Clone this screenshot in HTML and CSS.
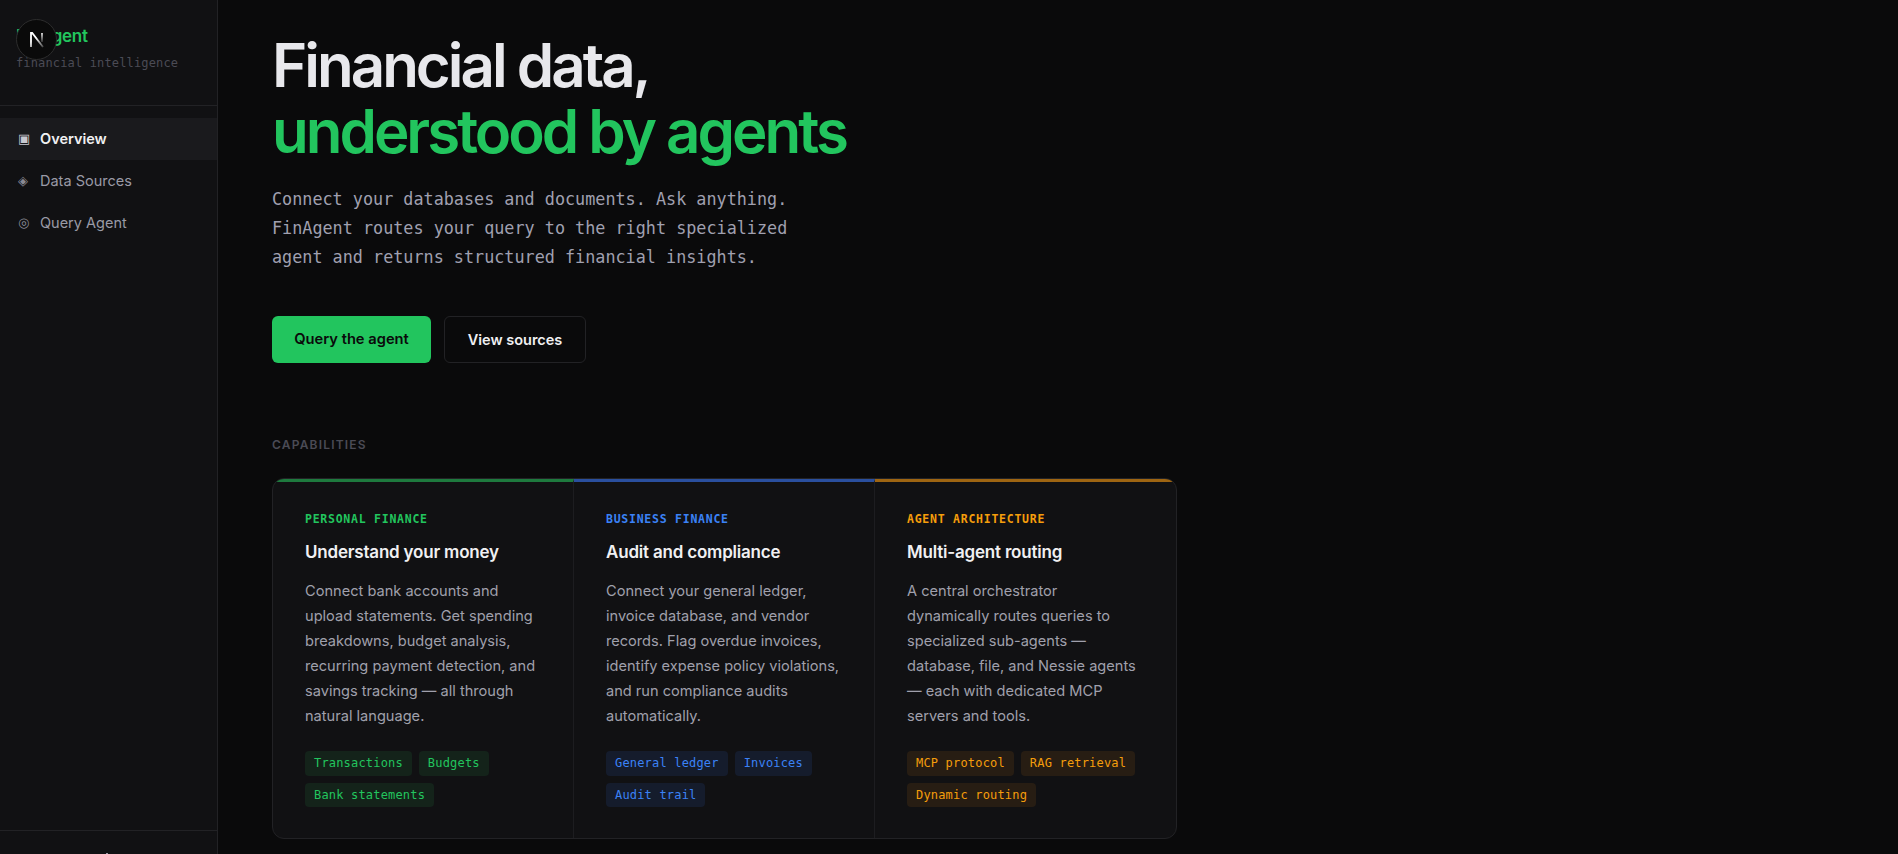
FILE: index.html
```html
<!DOCTYPE html>
<html lang="en">
<head>
    <meta charset="UTF-8">
    <meta name="viewport" content="width=device-width, initial-scale=1.0">
    <title>FinAgent</title>
    <link rel="stylesheet" href="styles.css">
</head>
<body>
<div class="app">
    <aside class="sidebar">
        <div class="brand">
            <div class="brand-name">FinAgent</div>
            <div class="brand-sub">financial intelligence</div>
        </div>
        <nav class="nav">
            <a class="nav-item active"><span class="nav-icon">▣</span>Overview</a>
            <a class="nav-item"><span class="nav-icon">◈</span>Data Sources</a>
            <a class="nav-item"><span class="nav-icon">◎</span>Query Agent</a>
        </nav>
        <div class="sidebar-foot"><span class="foot-mark"></span></div>
    </aside>

    <main class="main">
        <h1 class="hero-title">Financial data,<br><span class="green">understood by agents</span></h1>
        <p class="hero-text">Connect your databases and documents. Ask anything.<br>FinAgent routes your query to the right specialized<br>agent and returns structured financial insights.</p>
        <div class="actions">
            <a class="btn btn-primary">Query the agent</a>
            <a class="btn btn-ghost">View sources</a>
        </div>

        <div class="section-label">CAPABILITIES</div>

        <div class="cards">
            <section class="card card-green">
                <div class="card-tag">PERSONAL FINANCE</div>
                <h3 class="card-title">Understand your money</h3>
                <p class="card-text">Connect bank accounts and upload statements. Get spending breakdowns, budget analysis, recurring payment detection, and savings tracking — all through natural language.</p>
                <div class="chips">
                    <span class="chip">Transactions</span>
                    <span class="chip">Budgets</span>
                    <span class="chip">Bank statements</span>
                </div>
            </section>
            <section class="card card-blue">
                <div class="card-tag">BUSINESS FINANCE</div>
                <h3 class="card-title">Audit and compliance</h3>
                <p class="card-text">Connect your general ledger, invoice database, and vendor records. Flag overdue invoices, identify expense policy violations, and run compliance audits automatically.</p>
                <div class="chips">
                    <span class="chip">General ledger</span>
                    <span class="chip">Invoices</span>
                    <span class="chip">Audit trail</span>
                </div>
            </section>
            <section class="card card-amber">
                <div class="card-tag">AGENT ARCHITECTURE</div>
                <h3 class="card-title">Multi-agent routing</h3>
                <p class="card-text">A central orchestrator dynamically routes queries to specialized sub-agents — database, file, and Nessie agents — each with dedicated MCP servers and tools.</p>
                <div class="chips">
                    <span class="chip">MCP protocol</span>
                    <span class="chip">RAG retrieval</span>
                    <span class="chip">Dynamic routing</span>
                </div>
            </section>
        </div>
    </main>
</div>

<div class="next-badge">
    <svg width="16" height="16" viewBox="0 0 16 16" fill="none">
        <defs>
            <linearGradient id="n-fade" x1="4" y1="2" x2="14" y2="15" gradientUnits="userSpaceOnUse">
                <stop offset="0.3" stop-color="#fff"/>
                <stop offset="1" stop-color="#fff" stop-opacity="0.25"/>
            </linearGradient>
            <linearGradient id="n-right" x1="13" y1="1" x2="13" y2="11" gradientUnits="userSpaceOnUse">
                <stop offset="0" stop-color="#fff"/>
                <stop offset="1" stop-color="#fff" stop-opacity="0.1"/>
            </linearGradient>
        </defs>
        <path d="M2 15V1h1.2L14 15" stroke="url(#n-fade)" stroke-width="1.8"/>
        <path d="M13 1v9" stroke="url(#n-right)" stroke-width="1.6"/>
    </svg>
</div>
</body>
</html>
```

FILE: styles.css
```css
* {
    box-sizing: border-box;
}

body {
    margin: 0;
    background-color: #0a0a0b;
    color: #f0f0f2;
    font-family: Inter, "Noto Sans", sans-serif;
    overflow: hidden;
}

.app {
    display: flex;
    height: 854px;
}

.sidebar {
    width: 218px;
    flex-shrink: 0;
    display: flex;
    flex-direction: column;
    background-color: #111113;
    border-right: 1px solid #222225;
}

.brand {
    height: 106px;
    padding: 24px 16px 0;
    border-bottom: 1px solid #222225;
}

.brand-name {
    font-size: 17px;
    line-height: 24px;
    font-weight: 600;
    letter-spacing: -0.3px;
    color: #22c55e;
}

.brand-sub {
    margin-top: 7px;
    font-family: "DejaVu Sans Mono", "Liberation Mono", monospace;
    font-size: 12px;
    line-height: 16px;
    letter-spacing: 0.15px;
    color: #4b4b55;
}

.nav {
    flex: 1;
    padding-top: 12px;
}

.nav-item {
    display: flex;
    align-items: center;
    height: 42px;
    padding: 0 0 2px 18px;
    font-size: 14.5px;
    color: #9a9aa6;
}

.nav-item.active {
    background-color: #1a1a1d;
    color: #f0f0f2;
    font-weight: 600;
}

.nav-icon {
    width: 22px;
    flex-shrink: 0;
    font-family: "DejaVu Sans", sans-serif;
    font-size: 13px;
    font-weight: 400;
    color: #8a8a95;
}

.active .nav-icon {
    color: #c8c8d0;
}

.sidebar-foot {
    display: flex;
    align-items: flex-end;
    height: 24px;
    border-top: 1px solid #222225;
    padding-left: 106px;
}

.foot-mark {
    width: 2px;
    height: 1px;
    background-color: #9a9aa6;
}

.main {
    flex: 1;
    padding: 33px 54px 0;
}

.hero-title {
    margin: 0;
    font-size: 60px;
    line-height: 65.5px;
    font-weight: 600;
    letter-spacing: -3px;
    color: #e8e8ec;
}

.green {
    color: #22c55e;
}

.hero-text {
    margin: 21px 0 0;
    font-family: "DejaVu Sans Mono", "Liberation Mono", monospace;
    font-size: 16.8px;
    line-height: 29px;
    color: #a0a0b0;
}

.actions {
    display: flex;
    gap: 13px;
    margin-top: 44px;
}

.btn {
    display: flex;
    align-items: center;
    justify-content: center;
    height: 47px;
    padding-bottom: 1px;
    border-radius: 6px;
    font-size: 14.5px;
    font-weight: 600;
}

.btn-primary {
    width: 159px;
    padding-bottom: 2px;
    background-color: #22c55e;
    color: #0a0a0b;
    font-size: 14.7px;
}

.btn-ghost {
    width: 142px;
    border: 1px solid #222225;
    color: #f0f0f2;
}

.section-label {
    margin-top: 74px;
    font-size: 12px;
    line-height: 16px;
    font-weight: 600;
    letter-spacing: 1.2px;
    color: #4b4b55;
}

.cards {
    display: grid;
    grid-template-columns: repeat(3, 1fr);
    width: 905px;
    height: 361px;
    margin-top: 25px;
    background-color: #111113;
    border: 1px solid #222225;
    border-radius: 12px;
    overflow: hidden;
}

.card {
    padding: 29px 34px 0 32px;
    border-top: 3px solid;
    border-right: 1px solid #1d1d20;
}

.card:last-child {
    border-right: none;
}

.card-green { border-top-color: #1e7a3e; }
.card-blue { border-top-color: #2a4f9e; }
.card-amber { border-top-color: #9e6512; }

.card-tag {
    font-family: "DejaVu Sans Mono", "Liberation Mono", monospace;
    font-size: 11.5px;
    line-height: 16px;
    font-weight: 700;
    letter-spacing: 0.75px;
}

.card-green .card-tag, .card-green .chip { color: #22c55e; }
.card-blue .card-tag, .card-blue .chip { color: #3b82f6; }
.card-amber .card-tag, .card-amber .chip { color: #f59e0b; }

.card-title {
    margin: 13px 0 0;
    font-size: 17px;
    line-height: 24px;
    font-weight: 600;
    letter-spacing: -0.2px;
    color: #f0f0f2;
}

.card-text {
    margin: 15px 0 0;
    font-size: 14.6px;
    line-height: 25px;
    color: #a0a0ac;
}

.chips {
    display: flex;
    flex-wrap: wrap;
    gap: 7px;
    margin: 22px -8px 0 0;
}

.chip {
    padding: 0 9px;
    height: 24.5px;
    border-radius: 4px;
    font-family: "DejaVu Sans Mono", "Liberation Mono", monospace;
    font-size: 12px;
    line-height: 24px;
    letter-spacing: 0.18px;
}

.card-green .chip { background-color: #14231a; }
.card-blue .chip { background-color: #151c2c; }
.card-amber .chip { background-color: #271d13; }

.next-badge {
    position: absolute;
    left: 16px;
    top: 19px;
    width: 41px;
    height: 41px;
    display: flex;
    align-items: center;
    justify-content: center;
    background-color: #0a0a0a;
    border: 1.5px solid #2d2d2d;
    border-radius: 50%;
}
```
